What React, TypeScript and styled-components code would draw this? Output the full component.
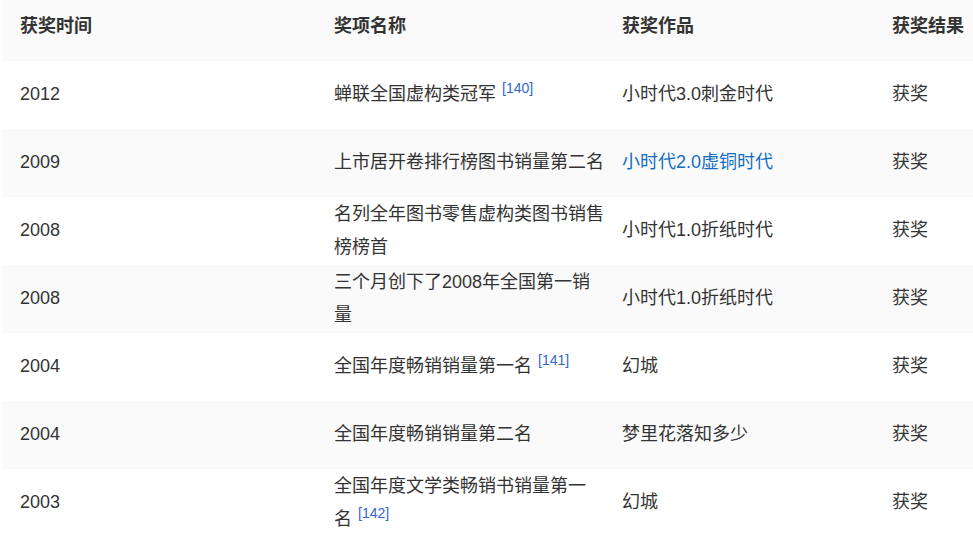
import React from "react";
import styled, { createGlobalStyle } from "styled-components";

const Global = createGlobalStyle`
  html, body {
    margin: 0;
    padding: 0;
    background: #ffffff;
    overflow: hidden;
  }
  body {
    font-family: "Liberation Sans", "Noto Sans CJK SC", sans-serif;
    color: #333333;
  }
`;

const Table = styled.div`
  margin: -7px 0 0 2px;
  width: 1000px;
  display: flex;
  flex-direction: column;
`;

const Row = styled.div<{ $shade?: boolean }>`
  display: grid;
  grid-template-columns: 314px 288px 270px 1fr;
  height: 68px;
  background: ${(p) => (p.$shade ? "#fafafa" : "#ffffff")};
`;

const Cell = styled.div<{ $head?: boolean }>`
  display: flex;
  align-items: center;
  padding: 0 0 1px 18px;
  font-size: 18px;
  line-height: 33px;
  font-weight: ${(p) => (p.$head ? 700 : 400)};
  color: #333333;
`;

const Text = styled.div`
  width: 270px;
`;

const Link = styled.span`
  color: #136ec2;
  cursor: pointer;
`;

const Sup = styled.sup`
  font-size: 14px;
  line-height: 14px;
  color: #3366cc;
  vertical-align: 7px;
  margin-left: 1px;
  cursor: pointer;
`;

type Item = {
  year: string;
  name: string;
  ref?: string;
  work: string;
  link?: boolean;
  result: string;
};

const rows: Item[] = [
  { year: "2012", name: "蝉联全国虚构类冠军", ref: "140", work: "小时代3.0刺金时代", result: "获奖" },
  { year: "2009", name: "上市居开卷排行榜图书销量第二名", work: "小时代2.0虚铜时代", link: true, result: "获奖" },
  { year: "2008", name: "名列全年图书零售虚构类图书销售榜榜首", work: "小时代1.0折纸时代", result: "获奖" },
  { year: "2008", name: "三个月创下了2008年全国第一销量", work: "小时代1.0折纸时代", result: "获奖" },
  { year: "2004", name: "全国年度畅销销量第一名", ref: "141", work: "幻城", result: "获奖" },
  { year: "2004", name: "全国年度畅销销量第二名", work: "梦里花落知多少", result: "获奖" },
  { year: "2003", name: "全国年度文学类畅销书销量第一名", ref: "142", work: "幻城", result: "获奖" },
];

export default function App() {
  return (
    <>
      <Global />
      <Table>
        <Row $shade>
          <Cell $head>获奖时间</Cell>
          <Cell $head>奖项名称</Cell>
          <Cell $head>获奖作品</Cell>
          <Cell $head>获奖结果</Cell>
        </Row>
        {rows.map((r, i) => (
          <Row key={i} $shade={i % 2 === 1}>
            <Cell>{r.year}</Cell>
            <Cell>
              <Text>
                {r.ref ? (
                  <>
                    {r.name}
                    {"\u00a0"}
                    <Sup>[{r.ref}]</Sup>
                  </>
                ) : (
                  r.name
                )}
              </Text>
            </Cell>
            <Cell>{r.link ? <Link>{r.work}</Link> : r.work}</Cell>
            <Cell>{r.result}</Cell>
          </Row>
        ))}
      </Table>
    </>
  );
}
